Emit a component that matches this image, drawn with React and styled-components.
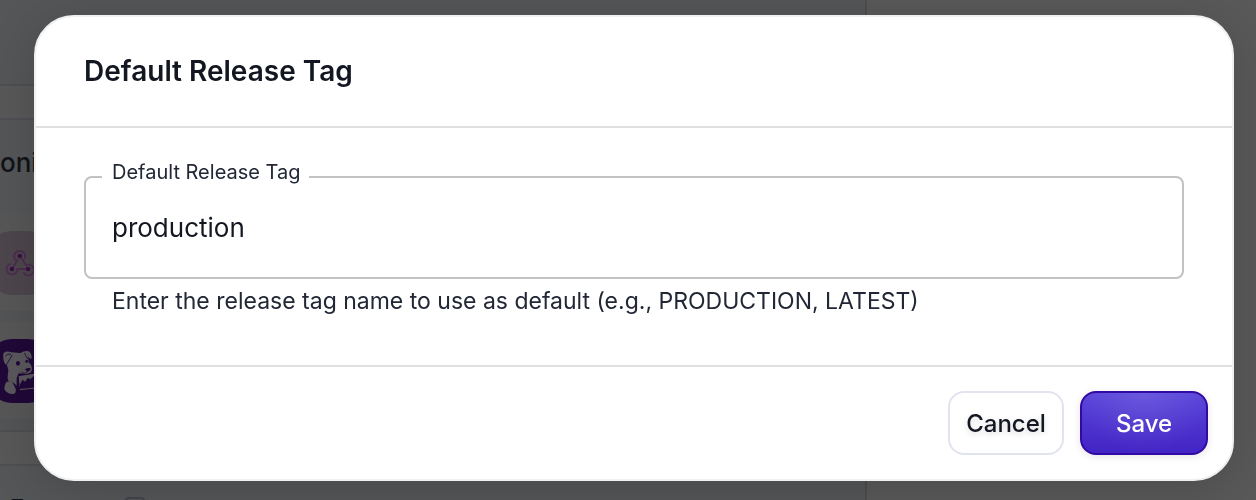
import React from 'react'
import styled, { createGlobalStyle } from 'styled-components'

const WebhookIcon = () => (
  <svg viewBox="0 0 64 64" width="64" height="64" aria-hidden="true">
    <g fill="none" stroke="#4b2c50" strokeWidth="1.8" strokeLinecap="round">
      <path d="M27.6 28.8A5.4 5.4 0 1 1 36.8 27" />
      <path d="M22 33A5.4 5.4 0 1 0 29.4 38H37" />
      <path d="M32 25l6 9.2A5.4 5.4 0 1 1 36 42" />
      <path d="M29.6 28.8L24.2 38" />
    </g>
    <g fill="#3b0f46">
      <circle cx="31.8" cy="25" r="2.3" />
      <circle cx="24" cy="38" r="2.3" />
      <circle cx="40" cy="38" r="2.3" />
    </g>
  </svg>
)

const DogIcon = () => (
  <svg viewBox="-36 0 192 192" width="64" height="64" aria-hidden="true">
    <g fill="#5a585c">
      <path d="M10 44C14 36 24 36 34 40L62 42C68 37 76 35 84 36C92 38 96 50 95 58C88 62 86 54 84 52L86 70C94 78 98 86 95 95C91 103 82 107 72 104L56 103L50 118L50 140C44 134 38 128 26 126C20 118 25 104 25 92L20 76C13 78 8 58 10 44Z" />
      <path d="M15 137C17 126 31 124 38 131L44 143C49 150 49 162 42 164C29 168 13 158 13 148Z" />
    </g>
    <g fill="#200838">
      <ellipse cx="54" cy="73" rx="6" ry="7" />
      <ellipse cx="80" cy="67" rx="4" ry="5" />
      <path d="M75 91C80 87 88 86 92 88C92 95 86 98 81 98Z" />
    </g>
    <g fill="none" stroke="#200838" strokeWidth="2.5">
      <path d="M16 52C24 43 31 44 36 50L26 66L20 76" />
      <path d="M73 42L83 60" />
      <path d="M64 98C69 105 77 103 82 99" />
    </g>
    <path
      d="M54 110L122 100L126 148L59 155Z"
      fill="#5a585c"
      stroke="#200838"
      strokeWidth="3"
    />
    <path
      d="M60 150L60 136L68 122L75 128L84 116L91 121L102 110L122 108V144Z"
      fill="#200838"
    />
  </svg>
)

const Backdrop = () => (
  <Page>
    <Main>
      <Banner />
      <Divider />
      <Strip />
      <Divider />
      <ListHeading>oni</ListHeading>
      <Item>
        <Tile $bg="#4d464c">
          <WebhookIcon />
        </Tile>
      </Item>
      <Gap />
      <Item>
        <Tile $bg="#200838">
          <DogIcon />
        </Tile>
      </Item>
      <Gap />
      <Divider />
      <Strip />
      <Divider />
      <Section>
        Features
        <Badge />
      </Section>
    </Main>
    <Side />
  </Page>
)

const App = () => {
  const [tag, setTag] = React.useState('production')

  return (
    <>
      <GlobalStyle />
      <Backdrop />
      <Overlay>
        <Dialog role="dialog" aria-modal="true" aria-labelledby="dialog-title">
          <Header>
            <Title id="dialog-title">Default Release Tag</Title>
          </Header>
          <Body>
            <Field>
              <Legend>
                <label htmlFor="release-tag">Default Release Tag</label>
              </Legend>
              <Input
                id="release-tag"
                type="text"
                value={tag}
                onChange={e => setTag(e.target.value)}
                aria-describedby="release-tag-help"
              />
            </Field>
            <Help id="release-tag-help">
              Enter the release tag name to use as default (e.g., PRODUCTION,
              LATEST)
            </Help>
          </Body>
          <Footer>
            <Button type="button">Cancel</Button>
            <PrimaryButton type="button">Save</PrimaryButton>
          </Footer>
        </Dialog>
      </Overlay>
    </>
  )
}

const GlobalStyle = createGlobalStyle`
  * {
    box-sizing: border-box;
  }
  body {
    margin: 0;
    font-family: Inter, sans-serif;
    color: #131722;
    background: #575757;
  }
`

const Page = styled.div`
  display: flex;
  height: 100vh;
  overflow: hidden;
`

const Main = styled.main`
  flex: 69;
  display: flex;
  flex-direction: column;
  background: #545657;
  border-right: 2px solid #4c4d50;
  > * {
    flex-shrink: 0;
  }
`

const Side = styled.aside`
  flex: 31;
  background: #595959;
`

const Banner = styled.div`
  height: 84px;
`

const Divider = styled.div`
  height: 2px;
  background: #4e4f52;
`

const Strip = styled.div`
  height: 32px;
  background: #585858;
`

const ListHeading = styled.div`
  height: 94px;
  line-height: 86px;
  font-size: 26px;
  font-weight: 500;
  color: #101319;
`

const Item = styled.div`
  height: 97px;
  padding: 17px 0;
  margin-left: -12px;
  background: #575757;
`

const Tile = styled.div`
  width: 64px;
  height: 64px;
  border-radius: 24px;
  overflow: hidden;
  background: ${props => props.$bg};
`

const Gap = styled.div`
  height: 11px;
  background: #525455;
`

const Section = styled.div`
  display: flex;
  align-items: center;
  gap: 14px;
  padding: 28px 10px;
  font-size: 24px;
  font-weight: 600;
  line-height: 30px;
  color: #11131c;
`

const Badge = styled.span`
  width: 20px;
  height: 24px;
  border: 2px solid #43434d;
  border-radius: 4px;
`

const Overlay = styled.div`
  position: fixed;
  inset: 0;
  padding: 15px 22px 19px 34px;
`

const Dialog = styled.div`
  border: 2px solid #f0f0f0;
  border-radius: 40px;
  background: #fff;
  box-shadow: 0 8px 48px rgba(0, 0, 0, 0.16);
`

const Header = styled.header`
  padding: 36px 48px;
  border-bottom: 2px solid #e0e0e0;
`

const Title = styled.h2`
  margin: 0;
  font-size: 28px;
  font-weight: 600;
  line-height: 37px;
`

const Body = styled.div`
  padding: 32px 48px 47px;
`

const Field = styled.fieldset`
  margin: 0;
  padding: 0 16px;
  min-width: 0;
  border: 2px solid #c2c2c2;
  border-radius: 8px;
`

/* extra space below the text lifts it above the outline */
const Legend = styled.legend`
  padding: 0 8px 10px 10px;
  font-size: 20px;
  line-height: 24px;
  color: #222736;
`

const Input = styled.input`
  display: block;
  width: 100%;
  height: 83px;
  padding: 0 10px 16px;
  border: 0;
  outline: 0;
  background: transparent;
  font-family: inherit;
  font-size: 26px;
  color: #131722;
`

const Help = styled.p`
  margin: 6px 28px 0;
  font-size: 23px;
  line-height: 33px;
  color: #222736;
`

const Footer = styled.footer`
  display: flex;
  justify-content: flex-end;
  gap: 16px;
  padding: 24px;
  border-top: 2px solid #e0e0e0;
`

const Button = styled.button`
  height: 64px;
  min-width: 116px;
  padding: 0 16px;
  border: 2px solid #e1e4ee;
  border-radius: 16px;
  background: #fff;
  font-family: inherit;
  font-size: 24px;
  font-weight: 500;
  color: #131722;
  text-shadow: 0 2px 6px rgba(0, 0, 0, 0.16);
  cursor: pointer;
`

const PrimaryButton = styled(Button)`
  min-width: 128px;
  border-color: #310aa5;
  background: radial-gradient(
      ellipse at 50% 0%,
      rgba(255, 255, 255, 0.1),
      transparent 75%
    ),
    linear-gradient(#5a46da, #4223c4);
  color: #fff;
  text-shadow: none;
  box-shadow: 0 2px 8px rgba(0, 0, 0, 0.1);
`

export default App
